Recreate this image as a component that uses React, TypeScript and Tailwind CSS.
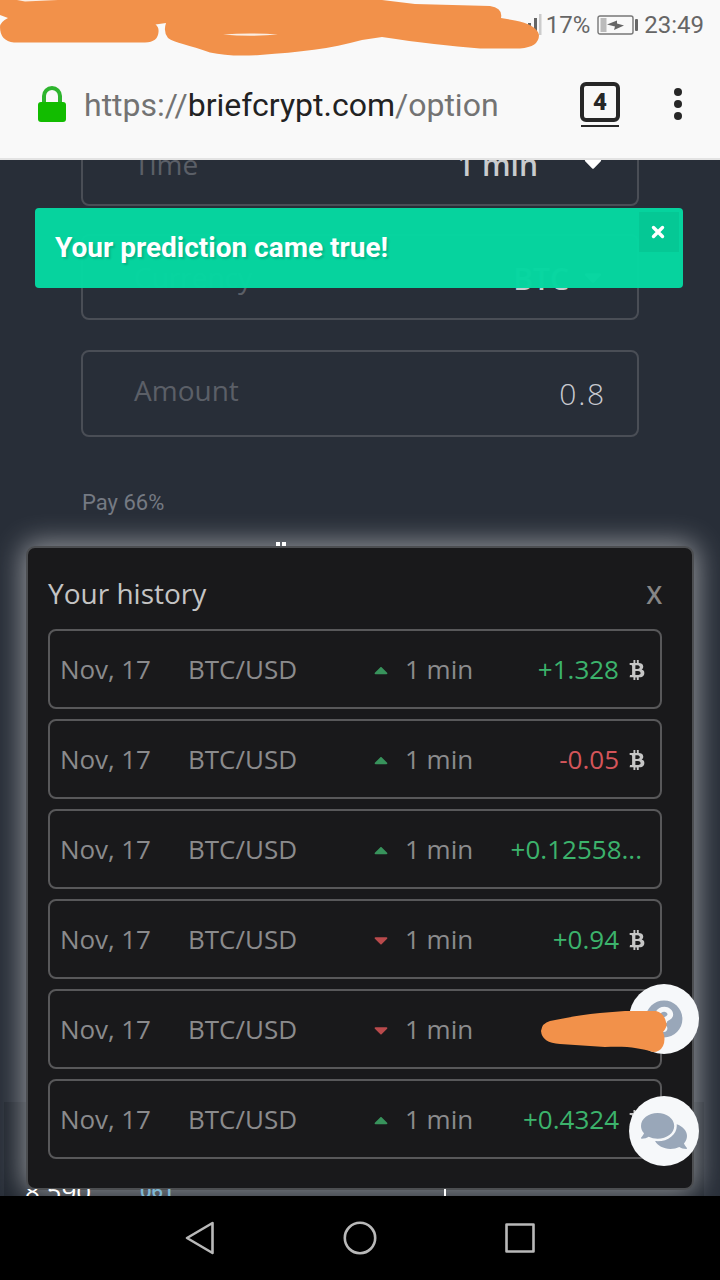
import React from "react";
import { FaBtc, FaCaretDown, FaCaretUp, FaComments, FaQuestionCircle } from "react-icons/fa";

const history = [
  { date: "Nov, 17", pair: "BTC/USD", up: true, time: "1 min", value: "+1.328", win: true, coin: true },
  { date: "Nov, 17", pair: "BTC/USD", up: true, time: "1 min", value: "-0.05", win: false, coin: true },
  { date: "Nov, 17", pair: "BTC/USD", up: true, time: "1 min", value: "+0.12558...", win: true, coin: false },
  { date: "Nov, 17", pair: "BTC/USD", up: false, time: "1 min", value: "+0.94", win: true, coin: true },
  { date: "Nov, 17", pair: "BTC/USD", up: false, time: "1 min", value: "", win: true, coin: false },
  { date: "Nov, 17", pair: "BTC/USD", up: true, time: "1 min", value: "+0.4324", win: true, coin: true },
];

function StatusBar() {
  return (
    <div className="relative flex h-[50px] items-center justify-end pr-4 font-[Roboto] text-[24px] leading-none text-[#666]">
      <svg className="mr-[4px] h-[24px] w-[16px]" viewBox="0 0 16 24">
        <rect x="2" y="10" width="3" height="12" fill="#666" />
        <rect x="8" y="5" width="3" height="17" fill="#666" />
        <rect x="13" y="1" width="2.5" height="21" fill="#ccc" />
      </svg>
      <span>17%</span>
      <svg className="ml-[7px] mr-[5px] h-[20px] w-[42px]" viewBox="0 0 42 20">
        <rect x="1" y="1" width="35" height="18" rx="2" fill="none" stroke="#777" strokeWidth="1.4" />
        <rect x="3.5" y="3" width="6" height="14" fill="#bbb" />
        <path d="M10 9.5 L20 5.5 L20 8.5 L27 10.5 L17 15 L18 11.5 Z" fill="#666" />
        <rect x="38" y="4" width="3" height="12" rx="1" fill="#666" />
      </svg>
      <span>23:49</span>

      {/* marker strokes */}
      <svg className="absolute left-0 top-0 h-[60px] w-[545px]" viewBox="0 0 545 60">
        <path
          d="M0 0 V15 L8 18 Q0 22 0 27 Q0 41 14 42.5 L145 42.5 Q158 42 158.5 32 Q159 27 155.500 24.500 L166 23 Q163 32 168 38 C174 43 190 45 210 52.500 Q230 57 260 55 C300 52 330 49 362 40 L382 37 C420 43 450 46 480 48.500 L520 48.500 Q539 47 539 35 C538 28 528 23 515 20.500 L501 18 Q503 8 490 6 L415 4 L382 0 Z"
          fill="#f2914a"
        />
        <path d="M223 34.500 Q250 32.500 278 34.500 Q250 37 223 34.500Z" fill="#fbeee4" />
        <path d="M17 0 H58 L25 1.500 Z" fill="#fbeee4" />
      </svg>
    </div>
  );
}

function AddressBar() {
  return (
    <div className="flex h-[108px] items-center pl-[38px] pr-[38px] font-[Roboto]">
      <svg className="h-[36px] w-[28px] shrink-0" viewBox="0 0 28 36">
        <path d="M6 18 V10 a8 8 0 0 1 16 0 V18" fill="none" stroke="#2eb52e" strokeWidth="4" />
        <rect x="0" y="16" width="28" height="20" rx="3" fill="#12bc00" />
      </svg>
      <div className="ml-[18px] mt-[2px] flex-1 whitespace-nowrap text-[32px] leading-none text-[#737373]">
        https://<span className="text-[#222]">briefcrypt.com</span>/option
      </div>
      <div className="mr-[54px] flex w-[40px] flex-col items-center">
        <div className="flex h-[40px] w-[40px] items-center justify-center rounded-[6px] border-[4px] border-[#272727] text-[24px] font-black leading-none text-[#272727]">
          4
        </div>
        <div className="mt-[3px] h-[2px] w-[38px] bg-[#272727]" />
      </div>
      <div className="flex flex-col gap-1">
        <div className="h-2 w-2 rounded-full bg-[#272727]" />
        <div className="h-2 w-2 rounded-full bg-[#272727]" />
        <div className="h-2 w-2 rounded-full bg-[#272727]" />
      </div>
    </div>
  );
}

function OptionForm() {
  return (
    <div className="px-[81px] text-[28px] leading-none text-[#5b5f67]">
      <div className="-mt-[41px] flex h-[87px] items-center justify-between rounded-lg border-2 border-[#4a4e56] pl-[51px] pr-[34px]">
        <span className="mt-[2px]">Time</span>
        <span className="flex items-center text-[30px] font-semibold text-[#c9cbce]">
          <span className="mt-[4px]">1 min</span>
          <FaCaretDown className="ml-[45px] h-[28px] w-[20px] text-white" />
        </span>
      </div>
      <div className="mt-[28px] flex h-[86px] items-center justify-between rounded-lg border-2 border-[#4a4e56] pl-[51px] pr-[34px]">
        <span>Currency</span>
        <span className="flex items-center text-[30px] font-semibold text-[#c9cbce]">
          <span className="mt-[3px]">BTC</span>
          <FaCaretDown className="ml-[14px] h-[28px] w-[20px] text-white" />
        </span>
      </div>
      <div className="mt-[30px] flex h-[87px] items-center justify-between rounded-lg border-2 border-[#4a4e56] pl-[51px] pr-[31px]">
        <span className="-mt-2">Amount</span>
        <span className="text-[30px] font-light tracking-[1.8px] text-[#c8cad0]">0.8</span>
      </div>
      <div className="ml-px mt-[55px] font-[Roboto] text-[22px] text-[#757a83]">Pay 66%</div>
    </div>
  );
}

function Toast() {
  return (
    <div className="absolute left-[35px] top-[48px] flex h-[80px] w-[648px] items-start justify-between rounded bg-[#06d6a0]/[0.99] pl-5 pr-1 pt-1 font-[Roboto]">
      <span className="mt-[20px] text-[28px] font-bold leading-[32px] text-white [text-shadow:2px_2px_2px_rgba(0,0,0,0.15)]">
        Your prediction came true!
      </span>
      <button className="flex h-10 w-10 items-center justify-center bg-black/5 pr-[2px]">
        <svg className="h-[14px] w-[14px]" viewBox="0 0 14 14">
          <path d="M2.500 2.500 L11.500 11.500 M11.500 2.500 L2.500 11.500" stroke="#fff" strokeWidth="3.400" strokeLinecap="round" />
        </svg>
      </button>
    </div>
  );
}

function HistoryModal() {
  return (
    <div className="absolute left-[26px] top-[386px] h-[644px] w-[668px] rounded-[9px] border-2 border-[#4c4e51] bg-[#19191b] pl-5 pr-[30px] shadow-[0_0_28px_3px_rgba(255,255,255,0.5)]">
      <div className="flex h-[81px] items-center justify-between pt-[9px] leading-none">
        <h2 className="text-[28px] text-[#c4c4c4]">Your history</h2>
        <span className="mt-[3px] text-[25px] font-semibold text-[#868686]">X</span>
      </div>
      <div className="flex flex-col gap-[10px]">
        {history.map((h, i) => (
          <div
            key={i}
            className="flex h-[80px] items-center whitespace-nowrap rounded-lg border-2 border-[#58585a] pl-[10px] pr-[15px] text-[26px] text-[#8b8b8d]"
          >
            <span className="w-[128px] tracking-[-0.1px]">{h.date}</span>
            <span className="w-[185px]">{h.pair}</span>
            {h.up ? (
              <FaCaretUp className="mt-px h-[22px] w-[16px] text-[#38935c]" />
            ) : (
              <FaCaretDown className="mt-px h-[22px] w-[16px] text-[#b94a4c]" />
            )}
            <span className="ml-[16px]">{h.time}</span>
            <span className={h.win ? "ml-auto text-[#3cb36c]" : "ml-auto text-[#d4555a]"}>{h.value}</span>
            {h.coin ? <FaBtc className="ml-[10px] mt-[2px] h-[20px] w-[16px] text-[#c6c6c6]" /> : <span className="w-[3px]" />}
          </div>
        ))}
      </div>
    </div>
  );
}

function NavBar() {
  return (
    <div className="flex h-[84px] items-center justify-center gap-[128px] bg-black">
      <svg className="h-[34px] w-[32px]" viewBox="0 0 32 34" fill="none" stroke="#b9b9b9" strokeWidth="2.600" strokeLinejoin="round">
        <path d="M28.500 2 V32 L3 17 Z" />
      </svg>
      <svg className="h-[34px] w-[32px] overflow-visible" viewBox="0 0 32 34" fill="none" stroke="#b9b9b9" strokeWidth="2.600">
        <circle cx="16" cy="17" r="15.200" />
      </svg>
      <svg className="h-[34px] w-[32px]" viewBox="0 0 32 34" fill="none" stroke="#b9b9b9" strokeWidth="2.600" strokeLinejoin="round">
        <rect x="2.500" y="3.500" width="27" height="27" />
      </svg>
    </div>
  );
}

export default function App() {
  return (
    <div className="flex h-[1280px] w-[720px] flex-col overflow-hidden bg-black font-['Open_Sans',sans-serif]">
      <header className="h-[160px] shrink-0 border-b-2 border-[#e3e3e3] bg-[#f9f9f9]">
        <StatusBar />
        <AddressBar />
      </header>

      <main className="relative h-[1036px] shrink-0 overflow-hidden bg-[#282e38]">
        <div className="absolute bottom-0 left-1 h-[94px] w-[700px] bg-[#20262f]" />
        <OptionForm />
        <Toast />
        <HistoryModal />

        {/* page content showing around the modal */}
        <div className="absolute left-[276px] top-[382px] flex gap-[2px]">
          <div className="h-1 w-1 bg-white" />
          <div className="h-1 w-1 bg-white" />
        </div>
        <div className="absolute left-[25px] top-[1029px] h-[7px] w-[500px] overflow-hidden">
          <div className="-mt-[11px] flex items-start leading-[26px]">
            <span className="w-[115px] text-[26px] font-medium text-white">8,590</span>
            <span className="w-[304px] text-[20px] font-semibold text-[#7fb8d4]">061</span>
            <span className="h-[26px] w-[2px] bg-white" />
          </div>
        </div>

        {/* floating buttons */}
        <div className="absolute left-[629px] top-[824px] flex h-[70px] w-[70px] items-center justify-center rounded-full bg-[#f6f8fa]">
          <FaQuestionCircle className="h-[38px] w-[38px] text-[#99a7b9]" />
        </div>
        <div className="absolute left-[629px] top-[936px] flex h-[70px] w-[70px] items-center justify-center rounded-full bg-[#f6f8fa]">
          <FaComments className="h-[46px] w-[46px] text-[#99a7b9]" />
        </div>
        <svg className="absolute left-[540px] top-[848px] h-[46px] w-[130px]" viewBox="0 0 130 46">
          <path
            d="M1 23 Q2 15 10 13 C25 10 40 7 60 5 L85 3 H116 Q124 5 126 14 Q128 18 123 24 Q126 31 123 38 Q120 44 113 44 C100 40 88 38 65 39 L20 36 Q2 35 1 23Z"
            fill="#f2914a"
          />
        </svg>
      </main>

      <NavBar />
    </div>
  );
}
